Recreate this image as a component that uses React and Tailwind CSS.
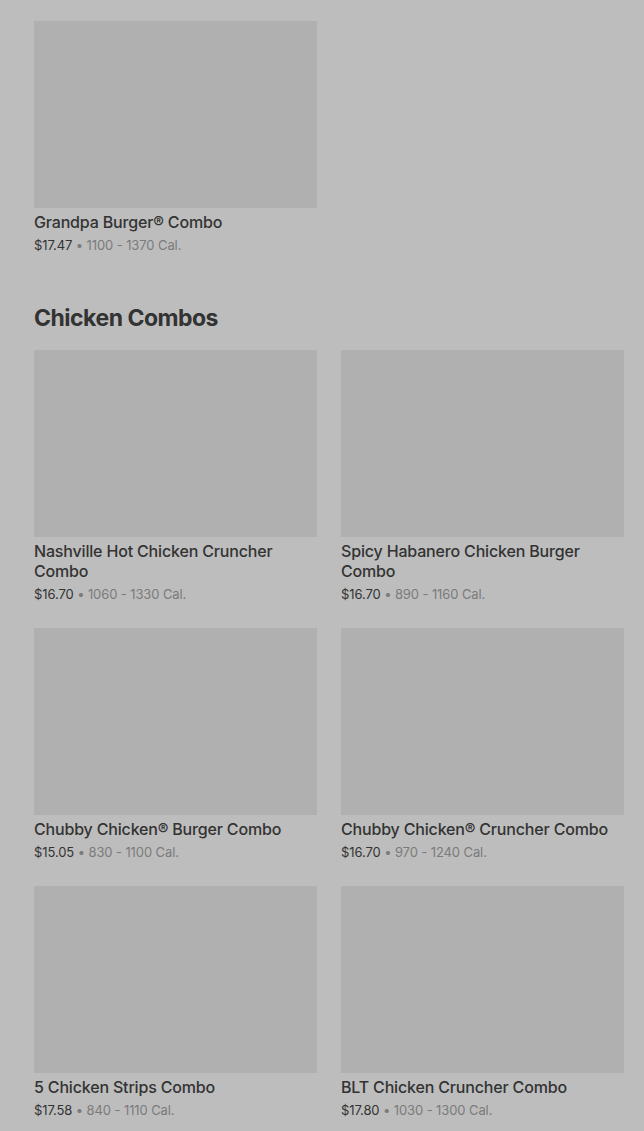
import React from "react";

const Card = ({ title, price, cal }) => (
  <div className="flex flex-col">
    <div className="h-[187px] w-full bg-[#b0b0b0]" />
    <div className="mt-[4px] text-[16px] leading-[20px] font-medium tracking-[-0.17px] text-[#333333]">{title}</div>
    <div className="mt-[4px] text-[13px] leading-[19px] tracking-[-0.1px] text-[#333333]">
      {price}
      <span className="text-[#7b7b7b]"> • {cal}</span>
    </div>
  </div>
);

const items = [
  ["Nashville Hot Chicken Cruncher Combo", "$16.70", "1060 - 1330 Cal."],
  ["Spicy Habanero Chicken Burger Combo", "$16.70", "890 - 1160 Cal."],
  ["Chubby Chicken® Burger Combo", "$15.05", "830 - 1100 Cal."],
  ["Chubby Chicken® Cruncher Combo", "$16.70", "970 - 1240 Cal."],
  ["5 Chicken Strips Combo", "$17.58", "840 - 1110 Cal."],
  ["BLT Chicken Cruncher Combo", "$17.80", "1030 - 1300 Cal."],
];

export default function App() {
  return (
    <div
      className="min-h-[1131px] w-full bg-[#bdbdbd] pl-[34px] pr-[20px] pt-[21px]"
      style={{ fontFamily: "Inter, 'Noto Sans', sans-serif" }}
    >
      <div className="grid grid-cols-2 gap-x-[24px]">
        <Card title="Grandpa Burger® Combo" price="$17.47" cal="1100 - 1370 Cal." />
      </div>
      <h2 className="mt-[47px] text-[23px] leading-[32px] font-bold text-[#333333] tracking-[-0.5px]">
        Chicken Combos
      </h2>
      <div className="mt-[16px] grid grid-cols-2 gap-x-[24px] gap-y-[24px]">
        {items.map(([t, p, c]) => (
          <Card key={t} title={t} price={p} cal={c} />
        ))}
      </div>
    </div>
  );
}
